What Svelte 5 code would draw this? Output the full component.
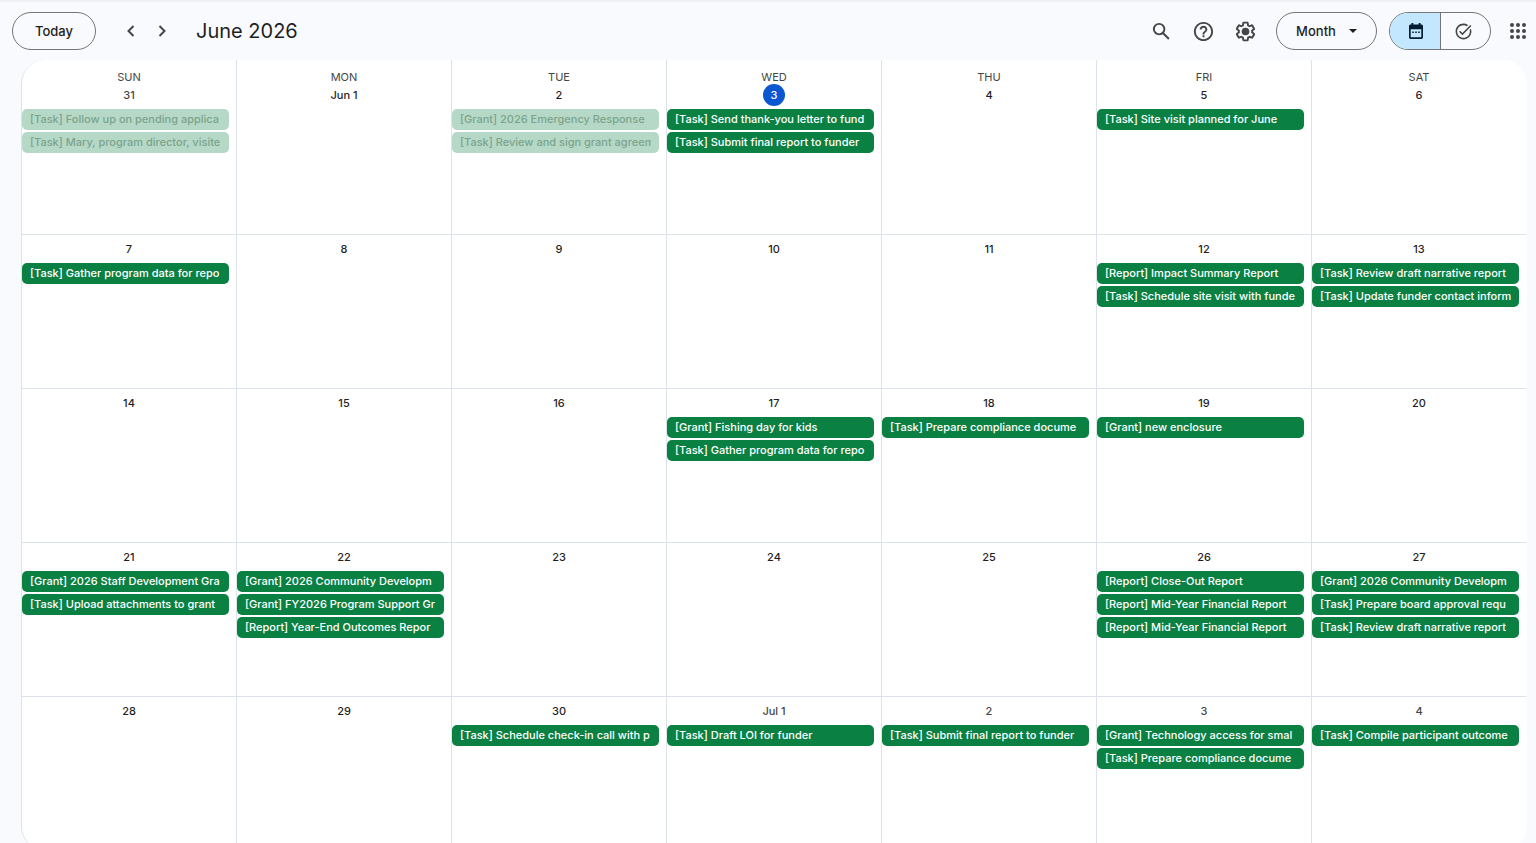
<script>
  const weekdays = ['Sun', 'Mon', 'Tue', 'Wed', 'Thu', 'Fri', 'Sat'];

  const weeks = [
    [
      { label: '31', other: true, past: true, events: ['[Task] Follow up on pending applica', '[Task] Mary, program director, visite'] },
      { label: 'Jun 1', events: [] },
      { label: '2', past: true, events: ['[Grant] 2026 Emergency Response', '[Task] Review and sign grant agreem'] },
      { label: '3', today: true, events: ['[Task] Send thank-you letter to fund', '[Task] Submit final report to funder'] },
      { label: '4', events: [] },
      { label: '5', events: ['[Task] Site visit planned for June'] },
      { label: '6', events: [] },
    ],
    [
      { label: '7', events: ['[Task] Gather program data for repo'] },
      { label: '8', events: [] },
      { label: '9', events: [] },
      { label: '10', events: [] },
      { label: '11', events: [] },
      { label: '12', events: ['[Report] Impact Summary Report', '[Task] Schedule site visit with funde'] },
      { label: '13', events: ['[Task] Review draft narrative report', '[Task] Update funder contact inform'] },
    ],
    [
      { label: '14', events: [] },
      { label: '15', events: [] },
      { label: '16', events: [] },
      { label: '17', events: ['[Grant] Fishing day for kids', '[Task] Gather program data for repo'] },
      { label: '18', events: ['[Task] Prepare compliance docume'] },
      { label: '19', events: ['[Grant] new enclosure'] },
      { label: '20', events: [] },
    ],
    [
      { label: '21', events: ['[Grant] 2026 Staff Development Gra', '[Task] Upload attachments to grant'] },
      { label: '22', events: ['[Grant] 2026 Community Developm', '[Grant] FY2026 Program Support Gr', '[Report] Year-End Outcomes Repor'] },
      { label: '23', events: [] },
      { label: '24', events: [] },
      { label: '25', events: [] },
      { label: '26', events: ['[Report] Close-Out Report', '[Report] Mid-Year Financial Report', '[Report] Mid-Year Financial Report'] },
      { label: '27', events: ['[Grant] 2026 Community Developm', '[Task] Prepare board approval requ', '[Task] Review draft narrative report'] },
    ],
    [
      { label: '28', events: [] },
      { label: '29', events: [] },
      { label: '30', events: ['[Task] Schedule check-in call with p'] },
      { label: 'Jul 1', other: true, events: ['[Task] Draft LOI for funder'] },
      { label: '2', other: true, events: ['[Task] Submit final report to funder'] },
      { label: '3', other: true, events: ['[Grant] Technology access for smal', '[Task] Prepare compliance docume'] },
      { label: '4', other: true, events: ['[Task] Compile participant outcome'] },
    ],
  ];
</script>

<div class="app">
  <header>
    <button class="pill today-btn">Today</button>
    <nav>
      <button class="icon" aria-label="Previous month">
        <svg class="line" viewBox="0 0 20 20" width="20" height="20"><path d="M12.5 5l-5 5 5 5" /></svg>
      </button>
      <button class="icon" aria-label="Next month">
        <svg class="line" viewBox="0 0 20 20" width="20" height="20"><path d="M7.5 5l5 5-5 5" /></svg>
      </button>
    </nav>
    <h1>June 2026</h1>

    <div class="tools">
      <button class="icon" aria-label="Search">
        <svg viewBox="0 0 24 24" width="23" height="23"><path d="M20.49 19l-5.73-5.73C15.53 12.2 16 10.91 16 9.5A6.5 6.5 0 1 0 9.5 16c1.41 0 2.7-.47 3.77-1.24L19 20.49 20.49 19zM5 9.5C5 7.01 7.01 5 9.5 5S14 7.01 14 9.5 11.99 14 9.5 14 5 11.99 5 9.5z" /></svg>
      </button>
      <button class="icon" aria-label="Support">
        <svg viewBox="0 0 24 24" width="23" height="23"><path d="M11 18h2v-2h-2v2zm1-16C6.48 2 2 6.48 2 12s4.48 10 10 10 10-4.48 10-10S17.52 2 12 2zm0 18c-4.41 0-8-3.59-8-8s3.59-8 8-8 8 3.59 8 8-3.59 8-8 8zm0-14c-2.21 0-4 1.79-4 4h2c0-1.1.9-2 2-2s2 .9 2 2c0 2-3 1.75-3 5h2c0-2.25 3-2.5 3-5 0-2.21-1.79-4-4-4z" /></svg>
      </button>
      <button class="icon" aria-label="Settings">
        <svg viewBox="0 0 24 24" width="23" height="23"><path d="M13.85 22.25h-3.7c-.74 0-1.36-.54-1.45-1.27l-.27-1.89c-.27-.14-.53-.29-.79-.46l-1.8.72c-.7.26-1.47-.03-1.81-.65L2.2 15.53c-.35-.66-.2-1.44.36-1.88l1.53-1.19c-.01-.15-.02-.3-.02-.46 0-.15.01-.31.02-.46l-1.52-1.19c-.59-.45-.74-1.26-.37-1.88l1.85-3.19c.34-.62 1.11-.9 1.79-.63l1.81.73c.26-.17.52-.32.78-.46l.27-1.91c.09-.7.71-1.25 1.44-1.25h3.7c.74 0 1.36.54 1.45 1.27l.27 1.89c.27.14.53.29.79.46l1.8-.72c.71-.26 1.48.03 1.82.65l1.84 3.18c.36.66.2 1.44-.36 1.88l-1.52 1.19c.01.15.02.3.02.46s-.01.31-.02.46l1.52 1.19c.56.45.72 1.23.37 1.86l-1.86 3.22c-.34.62-1.11.9-1.8.63l-1.8-.72c-.26.17-.52.32-.78.46l-.27 1.91c-.1.68-.72 1.22-1.46 1.22zm-3.23-2h2.76l.37-2.55.53-.22c.44-.18.88-.44 1.34-.78l.45-.34 2.38.96 1.38-2.4-2.03-1.58.07-.56c.03-.26.06-.51.06-.78s-.03-.53-.06-.78l-.07-.56 2.03-1.58-1.39-2.4-2.39.96-.45-.35c-.42-.32-.87-.58-1.33-.77l-.52-.22-.37-2.55h-2.76l-.37 2.55-.53.21c-.44.19-.88.44-1.34.79l-.45.33-2.38-.95-1.39 2.39 2.03 1.58-.07.56a7 7 0 0 0-.06.79c0 .26.02.53.06.78l.07.56-2.03 1.58 1.38 2.4 2.39-.96.45.35c.43.33.86.58 1.33.77l.53.22.38 2.55z" /><circle cx="12" cy="12" r="4" /></svg>
      </button>
      <button class="pill view">
        Month
        <svg viewBox="0 0 10 5" width="8" height="4"><path d="M0 0l5 5 5-5z" /></svg>
      </button>
      <div class="switch">
        <button class="active" aria-label="Calendar" aria-pressed="true">
          <svg viewBox="0 0 18 18" width="18" height="18"><path fill-rule="evenodd" d="M4.5 1h1.8v1.6h5.4V1h1.8v1.6h.8c1 0 1.7.7 1.7 1.7v11c0 1-.7 1.7-1.7 1.7H3.7c-1 0-1.7-.7-1.7-1.7v-11c0-1 .7-1.7 1.7-1.7h.8zM3.7 7.2v8.1h10.6V7.2z" /><path d="M5.2 9.5h1.6v1.6H5.2zM8.2 9.5h1.6v1.6H8.2zM11.2 9.5h1.6v1.6h-1.6z" /></svg>
        </button>
        <button aria-label="Tasks" aria-pressed="false">
          <svg viewBox="0 0 24 24" width="19" height="19"><path d="M22 5.18 10.59 16.6l-4.24-4.24 1.41-1.41 2.83 2.83 10-10L22 5.18zM19.79 10.22c.13.57.21 1.17.21 1.78 0 4.42-3.58 8-8 8s-8-3.58-8-8 3.58-8 8-8c1.58 0 3.04.46 4.28 1.25l1.44-1.44A9.9 9.9 0 0 0 12 2C6.48 2 2 6.48 2 12s4.48 10 10 10 10-4.48 10-10c0-1.19-.22-2.33-.6-3.39l-1.61 1.61z" /></svg>
        </button>
      </div>
      <button class="icon apps" aria-label="Google apps">
        <svg viewBox="0 0 16 16" width="16" height="16">
          {#each [2, 8, 14] as cy}
            {#each [2, 8, 14] as cx}
              <circle {cx} {cy} r="2" />
            {/each}
          {/each}
        </svg>
      </button>
    </div>
  </header>

  <main>
    <table>
      <thead>
        <tr>
          {#each weekdays as day}
            <th scope="col">{day}</th>
          {/each}
        </tr>
      </thead>
      <tbody>
        {#each weeks as week}
          <tr>
            {#each week as day}
              <td>
                <div class="date" class:other={day.other} class:today={day.today}><span>{day.label}</span></div>
                {#each day.events as event}
                  <button class="event" class:past={day.past}><span>{event}</span></button>
                {/each}
              </td>
            {/each}
          </tr>
        {/each}
      </tbody>
    </table>
  </main>
</div>

<style>
  :global(body) { background: #f8fafd; }
  .app { height: 100vh; overflow: hidden; box-sizing: border-box; border-top: 2px solid #eff1f5; font-family: "Google Sans", Inter, sans-serif; color: #1f1f1f; }
  button { font: inherit; color: inherit; background: none; border: 0; padding: 0; margin: 0; cursor: pointer; }
  svg { display: block; fill: currentColor; }
  .line { fill: none; stroke: currentColor; stroke-width: 2; }

  header { display: flex; align-items: center; height: 58px; padding: 0 10px 0 12px; box-sizing: border-box; }
  .pill { box-sizing: border-box; height: 38px; border: 1px solid #747775; border-radius: 19px; font-size: 13px; font-weight: 500; }
  .today-btn { width: 84px; }
  .icon { display: flex; align-items: center; justify-content: center; color: #444746; }
  nav { display: flex; margin-left: 19px; }
  nav .icon { width: 31px; height: 32px; }
  h1 { margin: 0 0 0 19px; font-size: 20px; line-height: 28px; font-weight: 400; }

  .tools { display: flex; align-items: center; margin-left: auto; }
  .tools .icon { width: 42px; height: 42px; }
  .view { display: flex; align-items: center; justify-content: center; gap: 13px; width: 101px; margin: 0 12px 0 10px; }
  .switch { display: flex; box-sizing: border-box; width: 102px; height: 38px; border: 1px solid #747775; border-radius: 19px; overflow: hidden; }
  .switch button { flex: 1; display: flex; align-items: center; justify-content: center; color: #444746; }
  .switch .active { padding-left: 3px; background: #c2e7ff; color: #001d35; border-right: 1px solid #747775; }
  .switch button:last-child { padding-right: 3px; }
  .tools .apps { width: 16px; margin-left: 19px; }

  main { margin: 0 9px 0 21px; background: #fff; border-radius: 24px; overflow: hidden; border-left: 1px solid #dde3ea; }
  table { width: 100%; table-layout: fixed; border-collapse: separate; border-spacing: 0; }
  th { padding: 10px 0 0; font-size: 11px; line-height: 14px; font-weight: 400; text-transform: uppercase; color: #444746; }
  td { height: 154px; box-sizing: border-box; padding: 3px 7px 0 0; vertical-align: top; border-top: 1px solid #dde3ea; }
  tbody tr:first-child td { height: 150px; padding-top: 0; border-top: 0; }
  th, td { border-right: 1px solid #dde3ea; }
  th:last-child, td:last-child { border-right-color: transparent; }

  .date { display: flex; justify-content: center; height: 22px; margin: 0 -7px 3px 0; font-size: 11px; line-height: 22px; font-weight: 500; }
  .date.other { color: #444746; }
  .today span { width: 22px; border-radius: 50%; background: #0b57d0; color: #fff; text-align: center; }

  .event { display: block; width: 100%; height: 21px; margin-bottom: 2px; padding: 0 8px; border-radius: 5px; background: #0b8043; color: #fff; font-size: 11px; line-height: 21px; font-weight: 500; text-align: left; }
  .event span { display: block; overflow: hidden; white-space: nowrap; }
  .event.past { background: #b6d9c7; color: #7ba38d; }
</style>
